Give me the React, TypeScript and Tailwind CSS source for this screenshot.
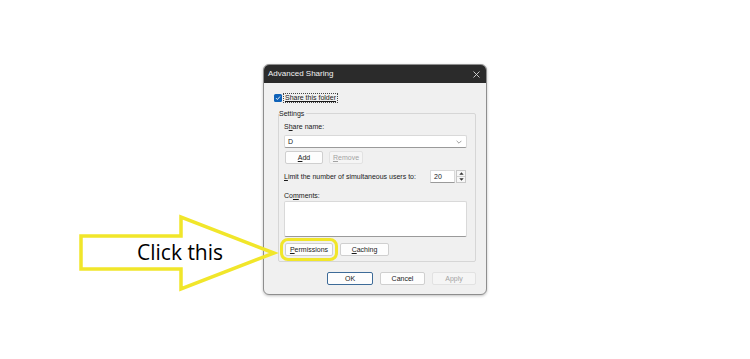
import React from "react";

function Btn({
  w,
  children,
  disabled,
  primary,
}: {
  w: string;
  children: React.ReactNode;
  disabled?: boolean;
  primary?: boolean;
}) {
  const base =
    "h-[13px] flex items-center justify-center rounded-[2px] text-[7px] leading-[9px] border shrink-0";
  const look = disabled
    ? "bg-[#f5f5f5] border-[#e2e2e2] text-[#a3a3a3]"
    : primary
    ? "bg-[#fdfdfd] border-[#3d6b98] text-[#1a1a1a]"
    : "bg-[#fdfdfd] border-[#cfcfcf] text-[#1a1a1a]";
  return <div className={`${base} ${look} ${w}`}>{children}</div>;
}

function Dialog() {
  return (
    <div className="w-[224px] h-[231px] rounded-[6px] border border-[#8e8e8e] bg-[#f0f0f0] overflow-hidden flex flex-col shadow-[0_1px_3px_rgba(0,0,0,0.25)]">
      {/* title bar */}
      <div className="h-[18px] shrink-0 bg-[#2b2b2b] flex items-center justify-between pl-[4px] pr-[6px]">
        <span className="text-[8px] leading-[10px] text-[#f2f2f2]">Advanced Sharing</span>
        <svg width="7" height="7" viewBox="0 0 7 7">
          <path d="M0.5 0.5 L6.5 6.5 M6.5 0.5 L0.5 6.5" stroke="#d8d8d8" strokeWidth="0.9" />
        </svg>
      </div>

      {/* body */}
      <div className="flex flex-col pl-[10px] pr-[10px] text-[7px] leading-[9px] text-[#1a1a1a]">
        {/* checkbox row */}
        <div className="mt-[11px] h-[8px] flex items-center">
          <div className="w-[8px] h-[8px] rounded-[1.5px] bg-[#0f62b8] flex items-center justify-center shrink-0">
            <svg width="6" height="6" viewBox="0 0 6 6">
              <path d="M1 3.1 L2.4 4.5 L5 1.5" fill="none" stroke="white" strokeWidth="0.9" />
            </svg>
          </div>
          <span className="ml-[1px] border border-dotted border-[#444] px-[1px] leading-[8px] underline">
            Share this folder
          </span>
        </div>

        {/* group box */}
        <div className="mt-[11px] ml-[4px] border border-[#d6d6d6] rounded-[2px] pl-[5px] pr-[8px] pb-[5px] flex flex-col">
          <span className="-mt-[5px] -ml-[5px] self-start bg-[#f0f0f0] pr-[2px]">Settings</span>

          <span className="mt-[4px]">
            S<span className="underline">h</span>are name:
          </span>

          <div className="mt-[4px] h-[13px] bg-white border border-[#d9d9d9] border-b-[#9a9a9a] rounded-[2px] flex items-center justify-between pl-[3px] pr-[4px]">
            <span>D</span>
            <svg width="6" height="4" viewBox="0 0 6 4">
              <path d="M0.6 0.8 L3 3.2 L5.4 0.8" fill="none" stroke="#777" strokeWidth="0.7" />
            </svg>
          </div>

          <div className="mt-[3px] ml-[1px] flex gap-[6px]">
            <Btn w="w-[38px]">
              <span className="underline">A</span>dd
            </Btn>
            <Btn w="w-[34px]" disabled>
              <span className="underline">R</span>emove
            </Btn>
          </div>

          <div className="mt-[6px] h-[13px] flex items-center justify-between">
            <span>
              <span className="underline">L</span>imit the number of simultaneous users to:
            </span>
            <div className="flex h-[13px] mr-[1px]">
              <div className="w-[25px] bg-white border border-[#d9d9d9] border-b-[#9a9a9a] flex items-center pl-[3px]">
                20
              </div>
              <div className="w-[10px] ml-[1px] bg-[#f7f7f7] border border-[#c8c8c8] flex flex-col items-center justify-center gap-[1px]">
                <svg width="5" height="3" viewBox="0 0 5 3">
                  <path d="M0.3 2.8 L2.5 0.3 L4.7 2.8 Z" fill="#333" />
                </svg>
                <div className="w-[8px] h-px bg-[#d0d0d0]" />
                <svg width="5" height="3" viewBox="0 0 5 3">
                  <path d="M0.3 0.2 L2.5 2.7 L4.7 0.2 Z" fill="#333" />
                </svg>
              </div>
            </div>
          </div>

          <span className="mt-[8px]">
            Co<span className="underline">m</span>ments:
          </span>

          <div className="mt-[1px] h-[36px] bg-white border border-[#d9d9d9] border-b-[#9a9a9a] rounded-[2px]" />

          <div className="mt-[6px] ml-[1px] flex gap-[7px]">
            <div className="relative">
              <Btn w="w-[48px]">
                <span className="underline">P</span>ermissions
              </Btn>
              <span className="absolute -left-[5px] -right-[5px] -top-[5px] -bottom-[5px] rounded-[8px] border-[3px] border-[#f1e62a]" />
            </div>
            <Btn w="w-[49px]">
              <span className="underline">C</span>aching
            </Btn>
          </div>
        </div>

        {/* bottom buttons */}
        <div className="mt-[10px] flex justify-end gap-[7px]">
          <Btn w="w-[46px]" primary>
            OK
          </Btn>
          <Btn w="w-[45px]">Cancel</Btn>
          <Btn w="w-[44px]" disabled>
            Apply
          </Btn>
        </div>
      </div>
    </div>
  );
}

export default function App() {
  return (
    <div className="relative w-[750px] h-[359px] bg-white overflow-hidden font-['Liberation_Sans',Arial,sans-serif]">
      <div className="pt-[64px] pl-[263px]">
        <Dialog />
      </div>
      <svg className="absolute left-0 top-0" width="750" height="359" viewBox="0 0 750 359">
        <polygon
          points="81,236 181,236 181,217 274,253 181,289 181,269 81,269"
          fill="none"
          stroke="#f1e62a"
          strokeWidth="3.5"
          strokeLinejoin="miter"
        />
      </svg>
      <span className="absolute left-[137px] top-[238px] text-[21px] leading-[29px] text-black font-['Open_Sans',sans-serif]">
        Click this
      </span>
    </div>
  );
}
